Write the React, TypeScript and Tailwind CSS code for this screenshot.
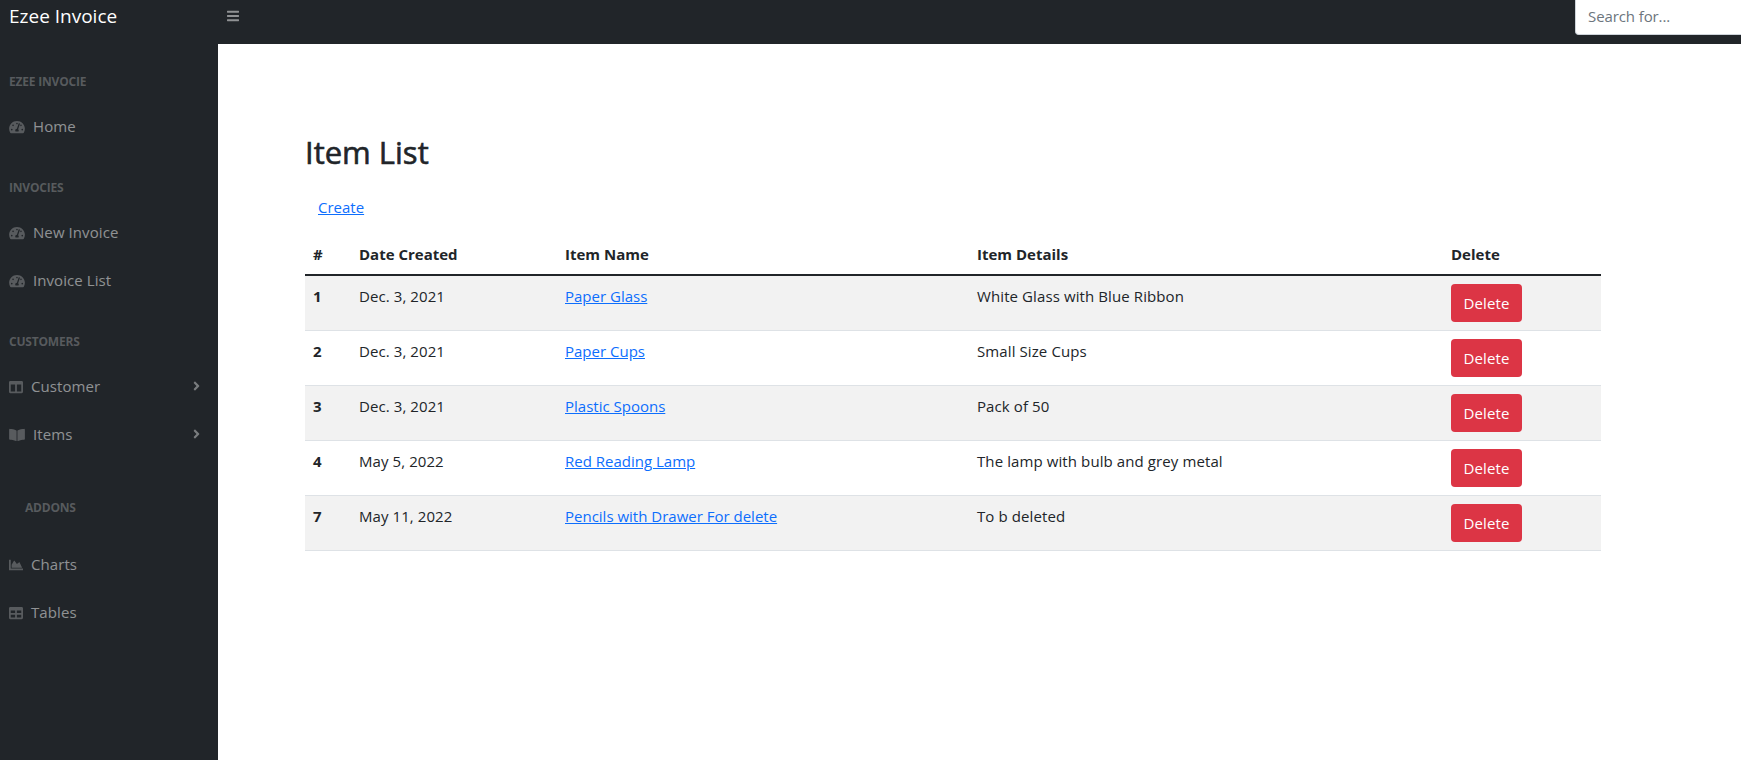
import React from "react";
import { FaTachometerAlt, FaColumns, FaBookOpen, FaChartArea, FaTable, FaAngleRight, FaBars } from "react-icons/fa";
import type { IconType } from "react-icons";

function Heading({ children, className = "pt-7 pb-3 pl-[9px]" }: { children: string; className?: string }) {
  return (
    <div className={`text-[12px] leading-[18px] font-bold uppercase tracking-[-0.2px] text-white/25 ${className}`}>
      {children}
    </div>
  );
}

function NavLink({ icon: Icon, width, label, expandable = false }: { icon: IconType; width: string; label: string; expandable?: boolean }) {
  return (
    <a href="#" className="flex h-12 items-center pl-[9px] pr-[17px] text-white/50">
      <Icon className={`mr-2 mb-px h-[14px] shrink-0 text-white/25 ${width}`} />
      <span className="mb-0.5 tracking-[0.08px]">{label}</span>
      {expandable && <FaAngleRight className="mb-0.5 ml-auto h-[14px] w-[9px] text-white/40" />}
    </a>
  );
}

const items = [
  { id: 1, date: "Dec. 3, 2021", name: "Paper Glass", details: "White Glass with Blue Ribbon" },
  { id: 2, date: "Dec. 3, 2021", name: "Paper Cups", details: "Small Size Cups" },
  { id: 3, date: "Dec. 3, 2021", name: "Plastic Spoons", details: "Pack of 50" },
  { id: 4, date: "May 5, 2022", name: "Red Reading Lamp", details: "The lamp with bulb and grey metal" },
  { id: 7, date: "May 11, 2022", name: "Pencils with Drawer For delete", details: "To b deleted" },
];

const columns = "grid grid-cols-[46px_206px_412px_474px_158px] [&>*]:px-2";

export default function App() {
  return (
    <div className="flex h-[760px] w-full flex-col overflow-hidden bg-white font-['Open_Sans','Noto_Sans',sans-serif] text-[15px] leading-6 text-[#212529]">
      <header className="flex h-[44px] shrink-0 bg-[#212529]">
        <div className="w-[227px] pt-px pl-[9px] text-[19px] leading-[30px] text-white">Ezee Invoice</div>
        <FaBars className="mt-[9px] h-[14px] w-3 text-white/50" />
        <div className="ml-auto h-[35px] w-[166px] rounded-bl-[4px] border-b border-l border-[#ced4da] bg-white pt-1 pl-3 tracking-[-0.1px] text-[#6c757d]">Search for...</div>
      </header>
      <div className="flex min-h-0 flex-1">
        <nav className="w-[218px] shrink-0 bg-[#212529] pt-px">
          <Heading>Ezee Invocie</Heading>
          <NavLink icon={FaTachometerAlt} width="w-4" label="Home" />
          <Heading>Invocies</Heading>
          <NavLink icon={FaTachometerAlt} width="w-4" label="New Invoice" />
          <NavLink icon={FaTachometerAlt} width="w-4" label="Invoice List" />
          <Heading>Customers</Heading>
          <NavLink icon={FaColumns} width="w-[14px]" label="Customer" expandable />
          <NavLink icon={FaBookOpen} width="w-4" label="Items" expandable />
          <Heading className="pt-10 pb-6 pl-[25px]">Addons</Heading>
          <NavLink icon={FaChartArea} width="w-[14px]" label="Charts" />
          <NavLink icon={FaTable} width="w-[14px]" label="Tables" />
        </nav>
        <main className="flex-1 pt-[89px] pl-[87px]">
          <h1 className="text-[31px] leading-[38px] font-medium [-webkit-text-stroke:0.6px_#212529]">Item List</h1>
          <a href="#" className="mt-6 ml-[13px] inline-block text-[#0d6efd] underline">Create</a>
          <div className="mt-4 w-[1296px]">
            <div className={`${columns} h-[41px] border-b-2 border-[#212529] pt-[7px] font-bold`}>
              <div>#</div>
              <div>Date Created</div>
              <div>Item Name</div>
              <div>Item Details</div>
              <div>Delete</div>
            </div>
            {items.map((item) => (
              <div key={item.id} className={`${columns} h-[55px] border-b border-[#dee2e6] pt-2 odd:bg-white even:bg-[#f2f2f2]`}>
                <div className="font-bold">{item.id}</div>
                <div className="tracking-[0.08px]">{item.date}</div>
                <div><a href="#" className="text-[#0d6efd] underline">{item.name}</a></div>
                <div className="tracking-[0.1px]">{item.details}</div>
                <div><button className="h-[38px] w-[71px] rounded-[4px] bg-[#dc3545] tracking-[0.1px] text-white">Delete</button></div>
              </div>
            ))}
          </div>
        </main>
      </div>
    </div>
  );
}
